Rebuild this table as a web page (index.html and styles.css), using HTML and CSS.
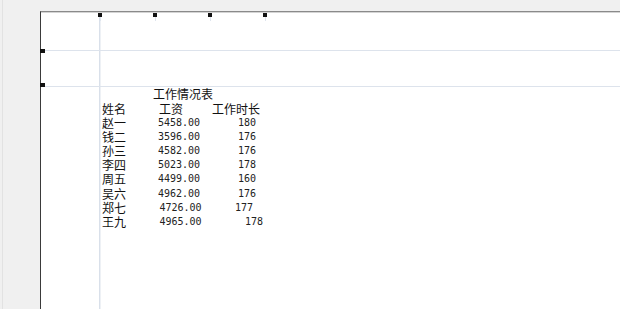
FILE: index.html
```html
<!DOCTYPE html>
<html lang="zh-CN">
<head>
<meta charset="utf-8">
<title>工作情况表</title>
<link rel="stylesheet" href="styles.css">
</head>
<body>
<div class="sheet">
  <span class="handle top h1"></span>
  <span class="handle top h2"></span>
  <span class="handle top h3"></span>
  <span class="handle top h4"></span>
  <span class="handle side s1"></span>
  <span class="handle side s2"></span>

  <div class="report">
    <div class="title">工作情况表</div>
    <div class="head">
      <span class="c-name">姓名</span>
      <span class="c-pay">工资</span>
      <span class="c-time">工作时长</span>
    </div>
    <div class="row"><span class="name">赵一</span><span class="num pay">5458.00</span><span class="num hours">180</span></div>
    <div class="row"><span class="name">钱二</span><span class="num pay">3596.00</span><span class="num hours">176</span></div>
    <div class="row"><span class="name">孙三</span><span class="num pay">4582.00</span><span class="num hours">176</span></div>
    <div class="row"><span class="name">李四</span><span class="num pay">5023.00</span><span class="num hours">178</span></div>
    <div class="row"><span class="name">周五</span><span class="num pay">4499.00</span><span class="num hours">160</span></div>
    <div class="row"><span class="name">吴六</span><span class="num pay">4962.00</span><span class="num hours">176</span></div>
    <div class="row"><span class="name">郑七</span><span class="num pay shift">4726.00</span><span class="num hours early">177</span></div>
    <div class="row"><span class="name">王九</span><span class="num pay shift">4965.00</span><span class="num hours late">178</span></div>
  </div>
</div>
</body>
</html>
```

FILE: styles.css
```css
html, body {
  margin: 0;
  padding: 0;
  height: 100%;
  overflow: hidden;
}

body {
  background:
    linear-gradient(#e2e2e2, #e2e2e2) 2px 0 / 1px 100% no-repeat,
    #f0f0f0;
  font-family: "Liberation Sans", "Noto Sans CJK SC", sans-serif;
  color: #111;
}

.sheet {
  position: relative;
  margin: 11px 0 0 40px;
  height: calc(100vh - 11px);
  border-top: 1px solid #8a8a8a;
  border-left: 1px solid #3a3a3a;
  box-shadow: inset 0 1px 0 #d4d4d4;
  background:
    linear-gradient(#dde3ec, #dde3ec) 0 38px / 100% 1px no-repeat,
    linear-gradient(#dde3ec, #dde3ec) 0 74px / 100% 1px no-repeat,
    linear-gradient(#d9e0ea, #d9e0ea) 58px 0 / 1px 100% no-repeat,
    linear-gradient(#eef1f5, #eef1f5) 59px 0 / 1px 100% no-repeat,
    #ffffff;
  padding: 75.5px 0 0 61px;
  box-sizing: border-box;
}

/* selection handles */
.handle {
  position: absolute;
  background: #111;
}
.handle.top {
  top: 1px;
  width: 4px;
  height: 4px;
}
.handle.top::after {
  content: "";
  position: absolute;
  left: 2px;
  top: 4px;
  width: 1px;
  height: 4px;
  background: #dfe5ee;
}
.h1 { left: 57px; }
.h2 { left: 112px; }
.h3 { left: 167px; }
.h4 { left: 222px; }

.handle.side {
  left: -1px;
  width: 5px;
  height: 4px;
}
.s1 { top: 37px; }
.s2 { top: 71px; }

/* report text */
.report {
  font-size: 12px;
}

.title {
  line-height: 15.5px;
  padding-left: 51px;
}

.head {
  display: flex;
  line-height: 14.1px;
}
.c-name { width: 57px; }
.c-pay { width: 53px; }

.row {
  display: grid;
  grid-template-columns: 56px 80px auto;
  line-height: 14.1px;
}

.num {
  font-family: "DejaVu Sans Mono", "Liberation Mono", monospace;
  font-size: 10px;
  color: #222;
  position: relative;
  top: -1px;
}

.pay.shift { padding-left: 1.5px; }
.hours.early { margin-left: -3px; }
.hours.late { margin-left: 7px; }
```
